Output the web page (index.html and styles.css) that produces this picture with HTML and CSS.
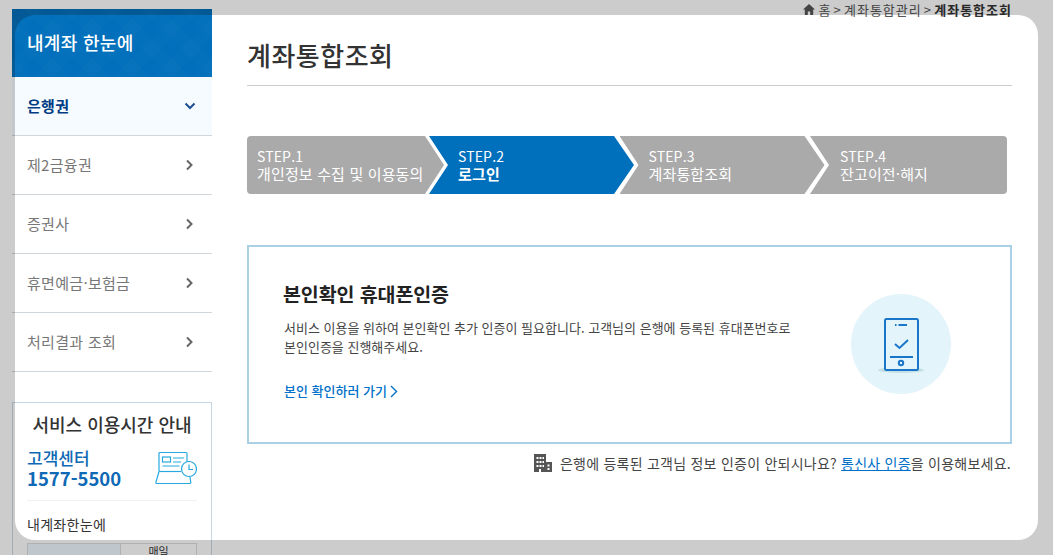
FILE: index.html
```html
<!DOCTYPE html>
<html lang="ko">
<head>
  <meta charset="UTF-8">
  <title>계좌통합조회</title>
  <link rel="stylesheet" href="styles.css">
</head>
<body>
  <div class="page">
    <aside class="side">
      <h2 class="side-title">내계좌 한눈에</h2>
      <ul class="menu">
        <li class="menu-item on">은행권
          <svg class="chev" width="12" height="12" viewBox="0 0 12 12"><path d="M1.5 3.5 6 8l4.5-4.5" fill="none" stroke="#1f4e96" stroke-width="2"/></svg>
        </li>
        <li class="menu-item">제2금융권
          <svg class="chev" width="12" height="12" viewBox="0 0 12 12"><path d="M3 1.5 7.5 6 3 10.5" fill="none" stroke="#666" stroke-width="2"/></svg>
        </li>
        <li class="menu-item">증권사
          <svg class="chev" width="12" height="12" viewBox="0 0 12 12"><path d="M3 1.5 7.5 6 3 10.5" fill="none" stroke="#666" stroke-width="2"/></svg>
        </li>
        <li class="menu-item">휴면예금·보험금
          <svg class="chev" width="12" height="12" viewBox="0 0 12 12"><path d="M3 1.5 7.5 6 3 10.5" fill="none" stroke="#666" stroke-width="2"/></svg>
        </li>
        <li class="menu-item">처리결과 조회
          <svg class="chev" width="12" height="12" viewBox="0 0 12 12"><path d="M3 1.5 7.5 6 3 10.5" fill="none" stroke="#666" stroke-width="2"/></svg>
        </li>
      </ul>
      <div class="service">
        <h3 class="service-title">서비스 이용시간 안내</h3>
        <div class="service-call">
          <p class="call-text">고객센터<strong>1577-5500</strong></p>
          <svg class="call-icon" width="42" height="34" viewBox="0 0 42 34" fill="none" stroke="#29a9e0" stroke-width="1.2">
            <path d="M4 20V2.500A1 1 0 0 1 5 1.500h26a1 1 0 0 1 1 1V11"/>
            <path d="M4 20.500h22"/>
            <path d="M4 20.500 .8 31.500a1 1 0 0 0 1 1h33a1 1 0 0 0 1-1L35 26"/>
            <rect x="7.500" y="6" width="8" height="5"/>
            <path d="M18 7h11M18 11h8M7.500 15h17"/>
            <circle cx="34" cy="18" r="7.500" fill="#fff"/>
            <path d="M34 13.500V18.500h4"/>
          </svg>
        </div>
        <p class="service-name">내계좌한눈에</p>
        <div class="service-tabs">
          <span class="tab on">조회</span>
          <span class="tab">매일</span>
        </div>
      </div>
    </aside>

    <main class="main">
      <p class="crumb">
        <svg width="12" height="11" viewBox="0 0 12 11"><path d="M6 0 0 5.500h1.800V11h3V7.500h2.400V11h3V5.500H12z" fill="#555"/></svg>
        <span>홈 &gt; 계좌통합관리 &gt; <b>계좌통합조회</b></span>
      </p>
      <h1 class="title">계좌통합조회</h1>
      <ol class="steps">
        <li class="step first"><span>STEP.1</span>개인정보 수집 및 이용동의</li>
        <li class="step now"><span>STEP.2</span><b>로그인</b></li>
        <li class="step"><span>STEP.3</span>계좌통합조회</li>
        <li class="step last"><span>STEP.4</span>잔고이전·해지</li>
      </ol>
      <section class="card">
        <div class="card-text">
          <h2 class="card-title">본인확인 휴대폰인증</h2>
          <p class="card-desc">서비스 이용을 위하여 본인확인 추가 인증이 필요합니다. 고객님의 은행에 등록된 휴대폰번호로<br>본인인증을 진행해주세요.</p>
          <a class="card-link" href="#">본인 확인하러 가기
            <svg width="8" height="13" viewBox="0 0 8 13"><path d="M1 1l5.500 5.500L1 12" fill="none" stroke="#0070c0" stroke-width="1.400"/></svg>
          </a>
        </div>
        <div class="card-pic">
          <svg width="100" height="100" viewBox="0 0 100 100">
            <circle cx="50" cy="50" r="50" fill="#e3f4fb"/>
            <ellipse cx="50" cy="76" rx="23" ry="3" fill="#c5dfe6"/>
            <rect x="34" y="25" width="33" height="51" rx="1.500" fill="#e3f4fb" stroke="#1a76c9" stroke-width="2"/>
            <path d="M44 31h1.500M47.500 31H56M39 63h23" fill="none" stroke="#1a76c9" stroke-width="1.800"/>
            <path d="M44 50l4.500 4L57 46" fill="none" stroke="#1a76c9" stroke-width="2"/>
            <circle cx="50" cy="69" r="2.200" fill="none" stroke="#1a76c9" stroke-width="2"/>
          </svg>
        </div>
      </section>
      <p class="note">
        <svg width="18" height="18" viewBox="0 0 18 18"><path d="M0 0h12v18H0zM12 8h6v10h-6z" fill="#555"/><path d="M2.500 3h2v2h-2zM5.500 3h2v2h-2zM8.500 3h1.500v2H8.500zM2.500 7h2v2h-2zM5.500 7h2v2h-2zM8.500 7h1.500v2H8.500zM2.500 11h2v2h-2zM5.500 11h2v2h-2zM8.500 11h1.500v2H8.500zM5 15h2v3H5zM13.500 10.500h2v2h-2zM13.500 14h2v2h-2z" fill="#fff"/></svg>
        <span>은행에 등록된 고객님 정보 인증이 안되시나요? <a href="#">통신사 인증</a>을 이용해보세요.</span>
      </p>
    </main>
  </div>
  <div class="scrim"></div>
</body>
</html>
```

FILE: styles.css
```css
* {
  box-sizing: border-box;
}
html, body {
  height: 100%;
}
body {
  margin: 0;
  overflow: hidden;
  background: #fff;
  color: #333;
  font-family: "Noto Sans CJK KR", "Noto Sans", sans-serif;
}
h1, h2, h3, p, ul, ol {
  margin: 0;
  padding: 0;
  list-style: none;
}
a {
  color: #0070c9;
  text-decoration: none;
}
.page {
  display: flex;
  gap: 35px;
  padding: 9px 0 0 12px;
  height: 555px;
  overflow: hidden;
}

/* sidebar */
.side {
  width: 200px;
  flex: none;
}
.side-title {
  height: 68px;
  padding: 0 0 2px 15px;
  line-height: 66px;
  font-size: 18px;
  font-weight: 500;
  letter-spacing: 0.3px;
  color: #fff;
  background-color: #016fbb;
  background-image:
    repeating-linear-gradient(45deg, rgba(255,255,255,0.012) 0 14px, transparent 14px 28px),
    repeating-linear-gradient(-45deg, rgba(255,255,255,0.012) 0 14px, transparent 14px 28px);
}
.menu-item {
  display: flex;
  justify-content: space-between;
  align-items: center;
  height: 59px;
  padding: 0 16px 2px 15px;
  border-bottom: 1px solid #cfd6dc;
  font-size: 15px;
  letter-spacing: 0.3px;
  color: #777;
}
.menu-item.on {
  background: #f6fbff;
  color: #003b83;
  font-weight: 700;
}
.chev {
  margin-top: 2px;
}
.service {
  margin-top: 30px;
  height: 153px;
  padding: 0 14px;
  border: 1px solid #c5d7e4;
  border-bottom: 0;
  overflow: hidden;
}
.service-title {
  margin-top: 8px;
  text-align: center;
  font-size: 18px;
  font-weight: 500;
  line-height: 26px;
  color: #333;
}
.service-call {
  display: flex;
  justify-content: space-between;
  align-items: center;
  height: 64px;
  padding-bottom: 2px;
  border-bottom: 1px solid #f0f0f0;
}
.call-text {
  font-size: 17px;
  font-weight: 500;
  line-height: 21px;
  color: #0f69b4;
}
.call-text strong {
  display: block;
  font-size: 18.500px;
  font-weight: 700;
}
.service-name {
  margin-top: 12px;
  font-size: 14px;
  letter-spacing: 0.3px;
  line-height: 22px;
  color: #333;
}
.service-tabs {
  display: flex;
  margin-top: 8px;
  height: 60px;
  border: 1px solid #ddd;
  font-size: 11px;
  line-height: 14px;
  text-align: center;
}
.tab {
  flex: 1;
}
.tab.on {
  flex: none;
  width: 93px;
  padding-top: 9px;
  background: #f0f9ff;
  color: #0f69b4;
  border-right: 1px solid #ddd;
}

/* main */
.main {
  width: 765px;
  flex: none;
}
.crumb {
  display: flex;
  justify-content: flex-end;
  align-items: center;
  gap: 4px;
  height: 1px;
  font-size: 13px;
  letter-spacing: 1px;
  word-spacing: -2.500px;
  color: #555;
  white-space: nowrap;
}
.crumb b {
  color: #333;
}
.title {
  height: 76px;
  padding-top: 26px;
  border-bottom: 1px solid #ccc;
  font-size: 26px;
  letter-spacing: 0.5px;
  line-height: 38px;
  font-weight: 500;
  color: #333;
}
.steps {
  display: flex;
  margin-top: 50px;
  width: 760px;
  height: 58px;
}
.step {
  flex: none;
  width: 205px;
  margin-right: -14.500px;
  padding: 12px 0 0 29px;
  background: #aaa;
  color: #fff;
  font-size: 15px;
  line-height: 17px;
  letter-spacing: 0.15px;
  white-space: nowrap;
  clip-path: polygon(0 0, 185px 0, 100% 50%, 185px 100%, 0 100%, 19px 50%);
}
.step span {
  display: block;
  font-size: 14px;
}
.step.first {
  width: 197px;
  padding-left: 10px;
  border-radius: 4px 0 0 4px;
  margin-right: -15px;
  clip-path: polygon(0 0, 178px 0, 100% 50%, 178px 100%, 0 100%);
}
.step.now {
  background: #006fbc;
}
.step.now b {
  font-weight: 700;
}
.step.last {
  width: 197px;
  margin-right: 0;
  padding-left: 30px;
  border-radius: 0 4px 4px 0;
  clip-path: polygon(0 0, 100% 0, 100% 100%, 0 100%, 19px 50%);
}
.card {
  display: flex;
  justify-content: space-between;
  align-items: center;
  margin-top: 51px;
  height: 199px;
  padding: 0 59px 0 35px;
  border: 2px solid #a9d0e5;
}
.card-text {
  align-self: flex-start;
  padding-top: 32px;
}
.card-title {
  margin-left: -1px;
  font-size: 19.500px;
  font-weight: 700;
  letter-spacing: -0.1px;
  line-height: 30px;
  color: #222;
}
.card-desc {
  margin-top: 9px;
  font-size: 13px;
  line-height: 19px;
  color: #444;
}
.card-link {
  display: inline-flex;
  align-items: center;
  gap: 3px;
  margin-top: 25px;
  font-size: 13px;
  font-weight: 500;
  line-height: 20px;
}
.card-pic {
  display: flex;
  margin-bottom: 2px;
}
.note {
  display: flex;
  justify-content: flex-end;
  align-items: center;
  gap: 8px;
  margin-top: 9px;
  padding-right: 1px;
  height: 20px;
  font-size: 14px;
  letter-spacing: 0.24px;
  color: #444;
  white-space: nowrap;
}
.note a {
  color: #0070c9;
  text-decoration: underline;
}

/* dim layer with the cut-out over the page */
.scrim {
  position: absolute;
  left: 15px;
  top: 15px;
  width: 1023px;
  height: 525px;
  border-radius: 20px;
  box-shadow: 0 0 0 1200px rgba(0, 0, 0, 0.2);
  pointer-events: none;
}
```
